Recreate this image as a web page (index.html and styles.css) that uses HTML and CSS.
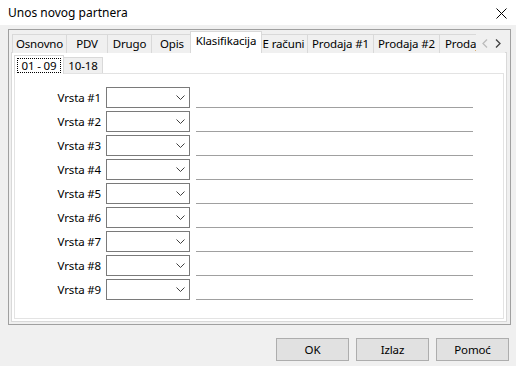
FILE: index.html
```html
<!DOCTYPE html>
<html>
<head>
<meta charset="utf-8">
<link rel="stylesheet" href="styles.css">
</head>
<body>
<div class="window">
  <div class="titlebar">
    <span class="title">Unos novog partnera</span>
    <svg class="close" width="11" height="11" viewBox="0 0 11 11"><path d="M0.5 0.5 L10.5 10.5 M10.5 0.5 L0.5 10.5" stroke="#000" stroke-width="1" fill="none"/></svg>
  </div>
  <div class="frame">
    <div class="tabstrip">
      <div class="tab w55 first">Osnovno</div>
      <div class="tab w42">PDV</div>
      <div class="tab w45">Drugo</div>
      <div class="tab w42">Opis</div>
      <div class="tab selected">Klasifikacija</div>
      <div class="tab w49">E računi</div>
      <div class="tab w67">Prodaja #1</div>
      <div class="tab w67">Prodaja #2</div>
      <div class="tab w67 clip">Prodaja #3</div>
      <div class="scroller">
        <svg width="6" height="9" viewBox="0 0 6 9"><path d="M5 0.5 L1 4.5 L5 8.5" stroke="#bcbcbc" stroke-width="1.3" fill="none"/></svg>
        <svg width="6" height="9" viewBox="0 0 6 9"><path d="M1 0.5 L5 4.5 L1 8.5" stroke="#404040" stroke-width="1.3" fill="none"/></svg>
      </div>
    </div>
    <div class="page">
      <div class="subtabs">
        <div class="subtab active"><span class="focus">01 - 09</span></div>
        <div class="subtab">10-18</div>
      </div>
      <div class="subpage">
        <div class="row"><span class="label">Vrsta #1</span><div class="combo"><svg width="9" height="5" viewBox="0 0 9 5"><path d="M0.5 0.5 L4.5 4.5 L8.5 0.5" stroke="#404040" fill="none"/></svg></div><div class="line"></div></div>
        <div class="row"><span class="label">Vrsta #2</span><div class="combo"><svg width="9" height="5" viewBox="0 0 9 5"><path d="M0.5 0.5 L4.5 4.5 L8.5 0.5" stroke="#404040" fill="none"/></svg></div><div class="line"></div></div>
        <div class="row"><span class="label">Vrsta #3</span><div class="combo"><svg width="9" height="5" viewBox="0 0 9 5"><path d="M0.5 0.5 L4.5 4.5 L8.5 0.5" stroke="#404040" fill="none"/></svg></div><div class="line"></div></div>
        <div class="row"><span class="label">Vrsta #4</span><div class="combo"><svg width="9" height="5" viewBox="0 0 9 5"><path d="M0.5 0.5 L4.5 4.5 L8.5 0.5" stroke="#404040" fill="none"/></svg></div><div class="line"></div></div>
        <div class="row"><span class="label">Vrsta #5</span><div class="combo"><svg width="9" height="5" viewBox="0 0 9 5"><path d="M0.5 0.5 L4.5 4.5 L8.5 0.5" stroke="#404040" fill="none"/></svg></div><div class="line"></div></div>
        <div class="row"><span class="label">Vrsta #6</span><div class="combo"><svg width="9" height="5" viewBox="0 0 9 5"><path d="M0.5 0.5 L4.5 4.5 L8.5 0.5" stroke="#404040" fill="none"/></svg></div><div class="line"></div></div>
        <div class="row"><span class="label">Vrsta #7</span><div class="combo"><svg width="9" height="5" viewBox="0 0 9 5"><path d="M0.5 0.5 L4.5 4.5 L8.5 0.5" stroke="#404040" fill="none"/></svg></div><div class="line"></div></div>
        <div class="row"><span class="label">Vrsta #8</span><div class="combo"><svg width="9" height="5" viewBox="0 0 9 5"><path d="M0.5 0.5 L4.5 4.5 L8.5 0.5" stroke="#404040" fill="none"/></svg></div><div class="line"></div></div>
        <div class="row"><span class="label">Vrsta #9</span><div class="combo"><svg width="9" height="5" viewBox="0 0 9 5"><path d="M0.5 0.5 L4.5 4.5 L8.5 0.5" stroke="#404040" fill="none"/></svg></div><div class="line"></div></div>
      </div>
    </div>
  </div>
  <div class="buttons">
    <div class="btn">OK</div>
    <div class="btn">Izlaz</div>
    <div class="btn">Pomoć</div>
  </div>
</div>
</body>
</html>
```
FILE: styles.css
```css
* { box-sizing: border-box; }
html, body { margin: 0; padding: 0; }
body {
  width: 516px;
  height: 366px;
  background: #f0f0f0;
  font-family: "Segoe UI", "Noto Sans", "Open Sans", sans-serif;
  font-size: 11.5px;
  letter-spacing: -0.15px;
  color: #000;
  overflow: hidden;
}
.window { display: flex; flex-direction: column; height: 366px; }
.titlebar {
  height: 25px;
  background: #fff;
  display: flex;
  align-items: center;
  justify-content: space-between;
  padding: 1px 8px 0 8px;
}
.title { font-size: 12px; line-height: 16px; letter-spacing: 0; }
.close { margin-right: 1px; }
.frame {
  margin: 4px 5px 0 8px;
  height: 296px;
  border: 1px solid #a0a0a0;
  padding: 1px 3px 2px 2px;
  display: flex;
  flex-direction: column;
}
.tabstrip {
  position: relative;
  height: 22px;
  display: flex;
  align-items: flex-end;
  overflow: hidden;
  flex: none;
  padding-left: 1px;
}
.tab {
  flex: none;
  height: 19px;
  margin-left: -1px;
  border: 1px solid #d9d9d9;
  border-bottom: none;
  background: #f0f0f0;
  text-align: center;
  line-height: 17px;
  white-space: nowrap;
  overflow: hidden;
}
.tab.first { margin-left: 0; }
.w42 { width: 42px; }
.w45 { width: 45px; }
.w49 { width: 49px; }
.w55 { width: 55px; }
.w67 { width: 67px; }
.tab.clip { text-align: left; padding-left: 5px; }
.tab.selected {
  position: relative;
  z-index: 2;
  width: 72px;
  height: 22px;
  margin-left: -3px;
  margin-right: -2px;
  background: #fff;
  line-height: 17px;
  border-color: #d9d9d9;
}
.scroller {
  position: absolute;
  right: 0;
  top: 3px;
  width: 31px;
  height: 18px;
  background: #f0f0f0;
  display: flex;
  align-items: center;
  justify-content: space-around;
  padding: 0 3px 0 2px;
  z-index: 3;
}
.page {
  flex: 1;
  background: #fff;
  border: 1px solid #d9d9d9;
  padding: 2px 2px 2px 2px;
  display: flex;
  flex-direction: column;
  margin-top: -1px;
}
.subtabs {
  display: flex;
  align-items: flex-end;
  height: 19px;
  flex: none;
}
.subtab {
  flex: none;
  height: 17px;
  border: 1px solid #d9d9d9;
  border-bottom: none;
  background: #f0f0f0;
  text-align: center;
  line-height: 16px;
  width: 40px;
  margin-left: -1px;
}
.subtab.active {
  position: relative;
  z-index: 2;
  margin-left: 0;
  width: 50px;
  height: 19px;
  background: #fff;
  padding-top: 2px;
}
.focus {
  display: inline-block;
  border: 1px dotted #000;
  line-height: 13px;
  padding: 0 4px;
}
.subpage {
  flex: 1;
  margin-top: -1px;
  border: 1px solid #e3e3e3;
  padding: 13px 0 0 0;
  display: flex;
  flex-direction: column;
  gap: 3px;
}
.row {
  display: flex;
  height: 21px;
  align-items: center;
}
.label {
  width: 86px;
  text-align: right;
  white-space: nowrap;
}
.combo {
  margin-left: 5px;
  width: 84px;
  height: 21px;
  border: 1px solid #7a7a7a;
  background: #fff;
  display: flex;
  align-items: center;
  justify-content: flex-end;
  padding-right: 4px;
}
.line {
  margin-left: 6px;
  width: 277px;
  height: 21px;
  border-bottom: 1px solid #a0a0a0;
}
.buttons {
  display: flex;
  justify-content: flex-end;
  gap: 7px;
  margin: 13px 7px 0 0;
}
.btn {
  width: 73px;
  height: 23px;
  border: 1px solid #adadad;
  background: #e1e1e1;
  text-align: center;
  line-height: 21px;
}
```
